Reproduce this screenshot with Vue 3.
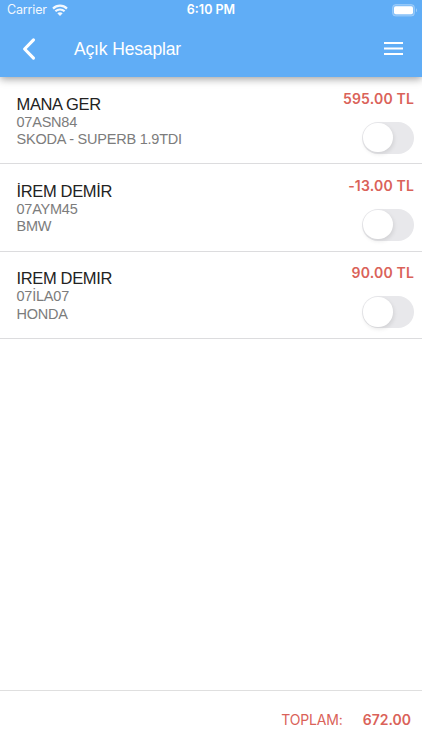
<script setup>
const accounts = [
  { name: 'MANA GER', plate: '07ASN84', car: 'SKODA - SUPERB 1.9TDI', amount: '595.00 TL' },
  { name: 'İREM DEMİR', plate: '07AYM45', car: 'BMW', amount: '-13.00 TL' },
  { name: 'IREM DEMIR', plate: '07İLA07', car: 'HONDA', amount: '90.00 TL' },
]
</script>

<template>
  <div class="screen">
    <header class="header">
      <div class="status">
        <div class="carrier">
          <span>Carrier</span>
          <svg class="wifi" width="16" height="12" viewBox="0 0 16 12">
            <g fill="none" stroke="#fff" stroke-width="2.2">
              <path d="M1 4.6C5 .7 11 .7 15 4.6" />
              <path d="M3.4 7.3c2.6-2.4 6.6-2.4 9.2 0" />
            </g>
            <path d="M8 11.9 5.3 9.3c1.5-1.3 3.9-1.3 5.4 0z" fill="#fff" />
          </svg>
        </div>
        <span class="clock">6:10 PM</span>
        <svg class="battery" width="26" height="13" viewBox="0 0 26 13">
          <rect x=".5" y=".5" width="22" height="11.6" rx="3.2" fill="#fff" fill-opacity=".22" stroke="#fff" stroke-opacity=".25" />
          <rect x="2" y="2.3" width="19" height="8" rx="1.8" fill="#fff" />
          <path d="M24 4.3c1.3.7 1.3 3.3 0 4z" fill="#fff" fill-opacity=".4" />
        </svg>
      </div>
      <div class="toolbar">
        <svg class="back" width="14" height="24" viewBox="0 0 14 24">
          <path d="M11.5 2.8 2.6 12l8.9 9.2" fill="none" stroke="#fff" stroke-width="3.1" stroke-linecap="round" stroke-linejoin="round" />
        </svg>
        <h1 class="title">Açık Hesaplar</h1>
        <svg class="menu" width="19" height="13" viewBox="0 0 19 13">
          <path d="M0 1h19M0 6.5h19M0 12h19" stroke="#fff" stroke-width="1.9" />
        </svg>
      </div>
    </header>
    <main class="list">
      <section v-for="a in accounts" :key="a.plate" class="row">
        <div class="info">
          <h2 class="name">{{ a.name }}</h2>
          <p class="detail">{{ a.plate }}</p>
          <p class="detail">{{ a.car }}</p>
        </div>
        <div class="side">
          <strong class="amount">{{ a.amount }}</strong>
          <span class="toggle"><span class="knob"></span></span>
        </div>
      </section>
    </main>
    <footer class="footer">
      <span class="label">TOPLAM:</span>
      <strong class="total">672.00</strong>
    </footer>
  </div>
</template>

<style>
body { margin: 0; background: #fff; }
</style>

<style scoped>
.screen {
  display: flex;
  flex-direction: column;
  height: 750px;
  overflow: hidden;
  background: #fff;
  font-family: "Liberation Sans", Arial, sans-serif;
}
.header {
  position: relative;
  height: 77px;
  flex: none;
  background: #60adf6;
  color: #fff;
  box-shadow: 0 2px 8px rgba(0, 0, 0, .38);
}
.status {
  display: grid;
  grid-template-columns: 1fr auto 1fr;
  align-items: center;
  height: 20px;
  padding: 0 4px 0 7px;
  font: 12.5px/20px Inter, sans-serif;
}
.carrier { display: flex; align-items: center; gap: 5px; opacity: .92; letter-spacing: -.15px; }
.clock { margin-right: 3px; font-weight: 600; font-size: 12.5px; }
.battery { justify-self: end; }
.toolbar {
  display: flex;
  align-items: center;
  height: 57px;
  padding: 0 19px 0 22px;
}
.title {
  flex: 1;
  margin: 0 0 0 38px;
  font-size: 17.5px;
  font-weight: 400;
  line-height: 24px;
  letter-spacing: -.15px;
}
.list { flex: 1; }
.row {
  display: flex;
  justify-content: space-between;
  box-sizing: border-box;
  height: 87.5px;
  padding: 0 8px 0 16.5px;
  border-bottom: 1px solid #dcdcde;
}
.row:first-child { height: 87px; }
.info { padding-top: 16.5px; }
.name { margin: 0; font-size: 16.5px; line-height: 20px; font-weight: 400; letter-spacing: -.35px; color: #222; }
.detail { margin: 0; font-size: 14.5px; line-height: 17.5px; letter-spacing: -.22px; color: #7c7c7c; }
.side { display: flex; flex-direction: column; align-items: flex-end; padding-top: 12.5px; }
.amount { font: 600 14px/18px Inter, sans-serif; letter-spacing: .17px; color: #da6259; }
.toggle {
  box-sizing: border-box;
  width: 52px;
  height: 32px;
  margin-top: 14px;
  padding: 1px;
  border-radius: 16px;
  background: #e8e8eb;
}
.knob {
  display: block;
  width: 29.5px;
  height: 29.5px;
  border-radius: 50%;
  background: #fff;
  box-shadow: 1px 2px 4px rgba(0, 0, 0, .1);
}
.footer {
  display: flex;
  justify-content: flex-end;
  align-items: center;
  gap: 20px;
  box-sizing: border-box;
  height: 60px;
  padding: 0 11px 1px 0;
  border-top: 1px solid #dfdfdf;
  font: 14px/20px Inter, sans-serif;
  color: #da6259;
}
.label { letter-spacing: -.15px; }
.total { font-weight: 600; }
</style>
